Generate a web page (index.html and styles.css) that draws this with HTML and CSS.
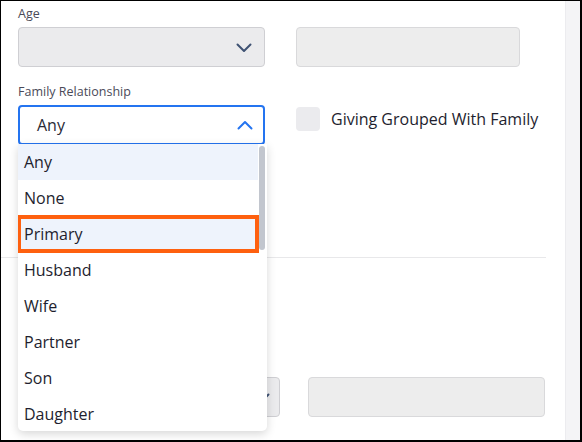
FILE: index.html
```html
<!DOCTYPE html>
<html lang="en">
<head>
<meta charset="utf-8">
<title>Filters</title>
<link rel="stylesheet" href="styles.css">
</head>
<body>
<div class="frame">
  <main class="content">
    <section class="form-top">
      <div class="row">
        <div class="field">
          <div class="label">Age</div>
          <div class="select disabled">
            <svg class="chev" width="16" height="10" viewBox="0 0 16 10"><polyline points="1.5,1.5 8,8 14.5,1.5" fill="none" stroke="#3f5273" stroke-width="2" stroke-linecap="round" stroke-linejoin="round"/></svg>
          </div>
        </div>
        <div class="field">
          <div class="label">&nbsp;</div>
          <div class="input disabled"></div>
        </div>
      </div>
      <div class="row row2">
        <div class="field">
          <div class="label">Family Relationship</div>
          <div class="select open">
            <span class="value">Any</span>
            <svg class="chev" width="16" height="10" viewBox="0 0 16 10"><polyline points="1.5,8.5 8,2 14.5,8.5" fill="none" stroke="#2474f0" stroke-width="2" stroke-linecap="round" stroke-linejoin="round"/></svg>
          </div>
        </div>
        <div class="field check-field">
          <span class="checkbox"></span>
          <span class="check-label">Giving Grouped With Family</span>
        </div>
      </div>
    </section>
    <hr class="divider">
    <section class="form-bottom">
      <div class="select disabled low">
        <svg class="chev" width="16" height="10" viewBox="0 0 16 10"><polyline points="1.5,1.5 8,8 14.5,1.5" fill="none" stroke="#3f5273" stroke-width="2" stroke-linecap="round" stroke-linejoin="round"/></svg>
      </div>
      <div class="input disabled"></div>
    </section>

    <div class="dropdown">
      <ul class="options">
        <li class="opt active">Any</li>
        <li class="opt">None</li>
        <li class="opt active marked">Primary</li>
        <li class="opt">Husband</li>
        <li class="opt">Wife</li>
        <li class="opt">Partner</li>
        <li class="opt">Son</li>
        <li class="opt">Daughter</li>
      </ul>
      <div class="track"><div class="thumb"></div></div>
    </div>
  </main>
  <aside class="gutter"></aside>
</div>
</body>
</html>
```

FILE: styles.css
```css
* { box-sizing: border-box; }
html, body { margin: 0; padding: 0; }
body {
  font-family: "Open Sans", "Noto Sans", sans-serif;
  background: #fff;
  color: #1e1e2e;
}
.frame {
  width: 582px;
  height: 442px;
  border-style: solid;
  border-color: #000;
  border-width: 1px 2px 2px 1px;
  display: flex;
  overflow: hidden;
}
.content {
  position: relative;
  width: 564px;
  flex: none;
  background: #fff;
}
.gutter {
  flex: 1;
  background: #f4f4f6;
  border-left: 1px solid #ececef;
}
.form-top {
  padding: 5px 0 0 17px;
  display: flex;
  flex-direction: column;
  gap: 17px;
}
.row {
  display: grid;
  grid-template-columns: 247px 224px;
  column-gap: 31px;
}
.label {
  font-size: 12.5px;
  line-height: 15px;
  height: 15px;
  color: #4a4a58;
  margin-bottom: 6px;
}
.select, .input {
  height: 40px;
  border-radius: 4px;
  position: relative;
  display: flex;
  align-items: center;
}
.select.disabled {
  background: #ebebed;
  border: 1px solid #cfcfd3;
}
.input.disabled {
  background: #ededed;
  border: 1px solid #d9d9db;
}
.select .chev {
  position: absolute;
  right: 12px;
  top: 15px;
}
.select.low .chev { right: 9px; }
.select.open {
  border: 2px solid #2474f0;
  background: #fff;
}
.select.open .chev { top: 13px; right: 10px; }
.select.open .value {
  font-size: 16px;
  padding-left: 17px;
  color: #2a2a36;
}
.check-field {
  padding-top: 23px;
  display: flex;
  align-items: flex-start;
  gap: 11px;
}
.checkbox {
  width: 24px;
  height: 24px;
  border-radius: 4px;
  background: #ebebee;
  flex: none;
}
.check-label {
  font-size: 16px;
  line-height: 24px;
  color: #1e1e2e;
  white-space: nowrap;
}
.divider {
  margin: 112px 19px 0 0;
  border: 0;
  border-top: 1px solid #e8e8ea;
  height: 0;
}
.form-bottom {
  margin-top: 119px;
  padding-left: 17px;
  display: grid;
  grid-template-columns: 262px 237px;
  column-gap: 28px;
}
.dropdown {
  position: absolute;
  left: 17px;
  top: 143px;
  width: 249px;
  height: 287px;
  background: #fff;
  border-radius: 0 0 5px 5px;
  box-shadow: 0 3px 10px rgba(0, 0, 0, 0.16);
  display: flex;
  overflow: hidden;
}
.options {
  list-style: none;
  margin: 0;
  padding: 0;
  width: 240px;
  flex: none;
}
.opt {
  height: 36px;
  line-height: 36px;
  font-size: 16px;
  padding-left: 6px;
  color: #1e1e2e;
}
.opt.active { background: #eef3fc; }
.opt.marked {
  outline: 4px solid #fe600f;
  outline-offset: -3px;
}
.track {
  flex: 1;
  padding: 2px 2px 0 1px;
}
.thumb {
  width: 6px;
  height: 104px;
  border-radius: 3px;
  background: #c2c6ce;
}
```
